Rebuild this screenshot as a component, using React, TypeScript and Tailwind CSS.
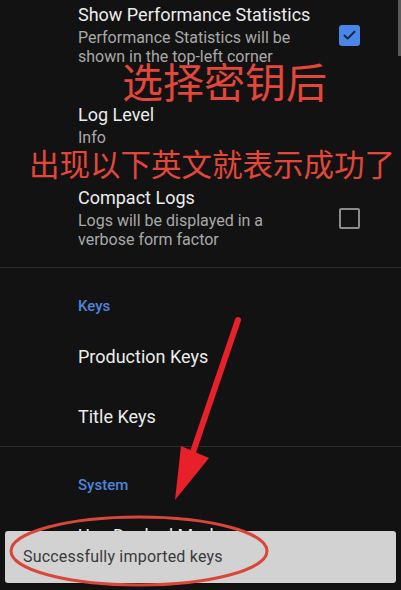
import { Check } from "lucide-react";

type ItemProps = {
  title: string;
  summary?: string[];
  checked?: boolean;
  className?: string;
};

function PrefItem({ title, summary, checked, className = "" }: ItemProps) {
  return (
    <div className={`flex items-center pl-[78px] pr-[41px] ${className}`}>
      <div className="flex-1">
        <div className="text-[18px] leading-[22px] text-[#ececec]">{title}</div>
        {summary && (
          <div className="mt-[2px] text-[16px] leading-[19px] text-[#a9a9a9]">
            {summary.map((line) => (
              <div key={line}>{line}</div>
            ))}
          </div>
        )}
      </div>
      {checked !== undefined &&
        (checked ? (
          <div className="flex h-[21px] w-[21px] items-center justify-center rounded-[3px] bg-[#4a86e8]">
            <Check className="h-[15px] w-[15px] text-[#16233a]" strokeWidth={3} />
          </div>
        ) : (
          <div className="h-[21px] w-[21px] rounded-[2px] border-2 border-[#8c8c8c]" />
        ))}
    </div>
  );
}

function SectionHeader({ label, className = "" }: { label: string; className?: string }) {
  return (
    <div className={`pl-[78px] text-[15px] font-medium leading-[20px] text-[#4d84dc] ${className}`}>
      {label}
    </div>
  );
}

export default function App() {
  return (
    <div
      className="relative h-[590px] w-[401px] overflow-hidden bg-[#121212]"
      style={{ fontFamily: "Roboto, 'Noto Sans CJK SC', sans-serif" }}
    >
      <div className="flex flex-col pt-[4px]">
        <PrefItem
          title="Show Performance Statistics"
          summary={["Performance Statistics will be", "shown in the top-left corner"]}
          checked
        />
        <PrefItem title="Log Level" summary={["Info"]} className="mt-[38px]" />
        <PrefItem
          title="Compact Logs"
          summary={["Logs will be displayed in a", "verbose form factor"]}
          checked={false}
          className="mt-[40px]"
        />
        <div className="mt-[18px] h-px bg-[#2c2c2c]" />
        <SectionHeader label="Keys" className="mt-[28px]" />
        <PrefItem title="Production Keys" className="mt-[30px]" />
        <PrefItem title="Title Keys" className="mt-[38px]" />
        <div className="mt-[18px] h-px bg-[#2c2c2c]" />
        <SectionHeader label="System" className="mt-[28px]" />
        <PrefItem title="Use Docked Mode" summary={["Increases resolution"]} className="mt-[30px]" />
      </div>

      {/* scrollbar thumb */}
      <div className="absolute right-0 top-0 h-[56px] w-[3px] bg-[#5a5a5a]" />

      {/* snackbar */}
      <div className="absolute left-[5px] right-[5px] top-[531px] flex h-[52px] items-center rounded-[3px] bg-[#d2d2d2] pl-[18px] text-[16px] tracking-[0.2px] text-[#3a3a3a] shadow">
        Successfully imported keys
      </div>

      {/* annotations */}
      <div
        className="absolute left-[122px] top-[60px] text-[41px] leading-none text-[#e4473a]"
        style={{ fontFamily: "'Noto Sans CJK SC', sans-serif" }}
      >
        选择密钥后
      </div>
      <div
        className="absolute left-[29px] top-[148px] text-[30.5px] leading-none text-[#e4473a]"
        style={{ fontFamily: "'Noto Sans CJK SC', sans-serif" }}
      >
        出现以下英文就表示成功了
      </div>
      <svg className="pointer-events-none absolute inset-0" width="401" height="590" viewBox="0 0 401 590">
        <line x1="238" y1="320" x2="193" y2="452" stroke="#e8202a" strokeWidth="6" strokeLinecap="round" />
        <polygon points="181,446 209,458 175,500" fill="#e8202a" />
        <ellipse cx="139" cy="551" rx="128" ry="34" fill="none" stroke="#d9473b" strokeWidth="3" />
      </svg>
    </div>
  );
}
